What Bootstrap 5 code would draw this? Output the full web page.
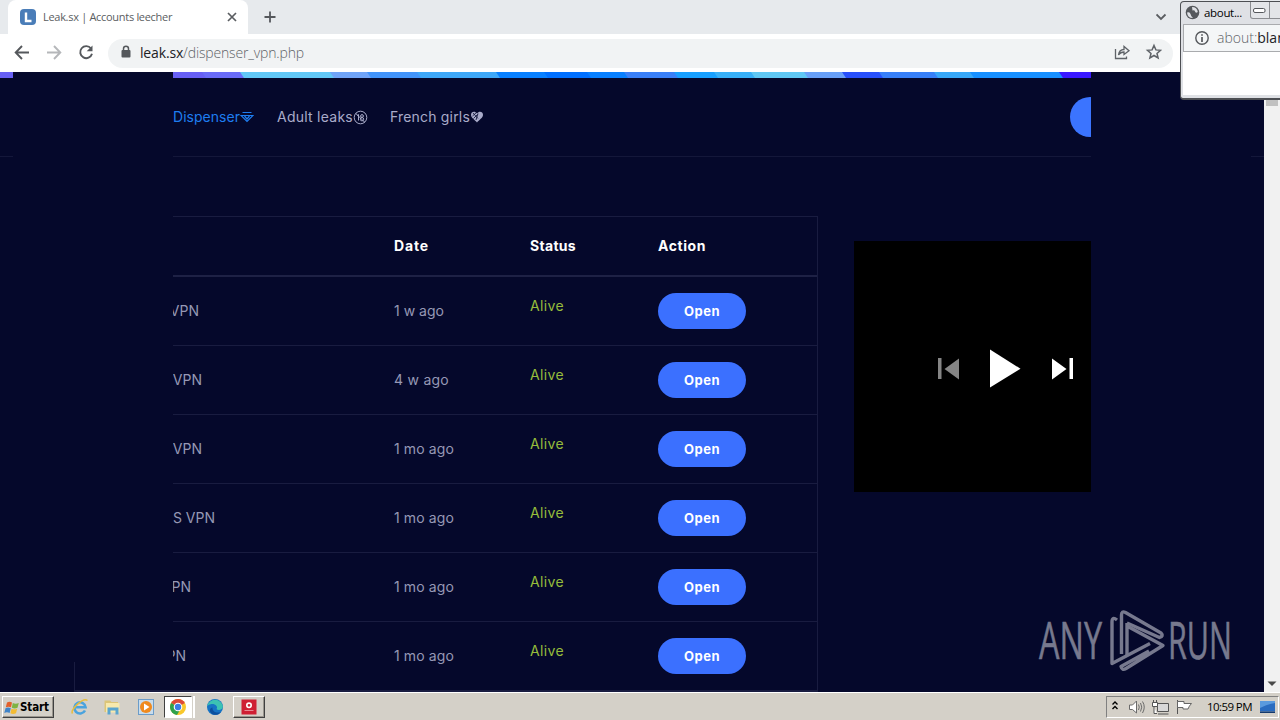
<!DOCTYPE html>
<html lang="en">
<head>
    <meta charset="UTF-8">
    <meta name="viewport" content="width=device-width, initial-scale=1.0">
    <title>Leak.sx | Accounts leecher</title>

    <!-- Bootstrap CSS -->
    <link href="https://cdn.jsdelivr.net/npm/bootstrap@5.3.0/dist/css/bootstrap.min.css" rel="stylesheet">
    <script src="https://cdn.jsdelivr.net/npm/bootstrap@5.3.0/dist/js/bootstrap.bundle.min.js"></script>

    <style>
        body {
            width: 1280px;
            height: 720px;
            background-color: #05082b;
            font-family: "Inter", "Liberation Sans", sans-serif;
        }
        svg {
            display: block;
            flex: none;
        }

        /* Browser chrome */
        .tab-strip {
            height: 34px;
            background: #e7eaed;
            padding-left: 8px;
        }
        .browser-tab {
            width: 240px;
            background: #fff;
            border-radius: 8px 8px 0 0;
            padding: 0 10px 0 12px;
            font: 11px "Open Sans", sans-serif;
            color: #5a5d61;
        }
        .tab-title {
            margin-left: 7px;
            padding-bottom: 2px;
        }
        .toolbar {
            height: 38px;
            background: #fff;
            padding-left: 13px;
        }
        .address {
            width: 1065px;
            height: 29px;
            margin-left: 13px;
            padding: 0 11px 2px 12px;
            border-radius: 15px;
            background: #f1f3f4;
            font: 300 14px "Open Sans", sans-serif;
            color: #5f6368;
        }
        .address b {
            font-weight: 400;
            color: #202124;
        }

        /* Web page */
        .page-view {
            height: 620px;
        }
        .site {
            width: 1264px;
        }
        .site-nav {
            height: 79px;
            border-bottom: 1px solid #14173a;
            padding: 0 154px 0 173px;
            font-size: 14px;
            color: #a9abc9;
        }
        .nav-item-text {
            height: 22px;
            line-height: 22px;
        }
        .nav-active {
            color: #1e7df0;
        }
        .round-btn {
            width: 40px;
            height: 40px;
            background: #3b74ff;
        }
        .site-main {
            padding: 59px 0 0 74px;
            gap: 36px;
        }
        .leaks {
            width: 744px;
            border: 1px solid #191c40;
            font-size: 14px;
            color: #9698b5;
        }
        .leaks-row {
            height: 69px;
            border-bottom: 1px solid #191c40;
        }
        .leaks-head {
            height: 60px;
            border-bottom: 2px solid #1e2145;
            font-weight: 700;
            color: #fff;
        }
        .cell-name { width: 319px; }
        .cell-date { width: 136px; }
        .cell-status { width: 128px; }
        .leaks-head > div,
        .cell-name,
        .cell-date {
            padding-bottom: 2px;
        }
        .alive {
            color: #96bd3b;
            padding-bottom: 12px;
        }
        .open-btn {
            width: 88px;
            height: 36px;
            padding-top: 1px;
            background: #3b70ff;
            color: #fff;
            font-size: 13px;
            font-weight: 700;
        }
        .player {
            width: 302px;
            height: 251px;
            margin-top: 25px;
            background: #000;
        }
        .side-ad {
            top: 0;
            width: 160px;
            height: 590px;
            background: #05082b;
        }
        .side-ad-left { left: 13px; }
        .side-ad-right { left: 1091px; }
        .scroll-track {
            width: 16px;
            background: #f1f1f1;
            padding: 28px 2px 5px;
        }
        .scroll-thumb {
            height: 6px;
            background: #c1c1c1;
        }
        .watermark {
            left: 1030px;
            top: 600px;
        }

        /* Popup window */
        .popup {
            left: 1180px;
            top: 1px;
            width: 110px;
            height: 99px;
            border: 1px solid #4d4f53;
            border-bottom-width: 2px;
            border-radius: 4px;
            background: #dfe1e5;
            padding: 0 0 3px 2px;
        }
        .popup-title {
            height: 22px;
            padding: 0 0 2px 2px;
            font: 11.5px "Open Sans", sans-serif;
            color: #000;
        }
        .popup-min {
            width: 26px;
            height: 17px;
            border: 1px solid #8b8d91;
            border-top: 0;
            border-radius: 0 0 0 3px;
            margin-left: 8px;
            background: #e3e5e8;
        }
        .popup-bar {
            height: 28px;
            background: #f4f6f7;
            border: 1px solid #a9abae;
            padding: 0 0 1px 11px;
            gap: 8px;
            font: 300 14px "Open Sans", sans-serif;
            color: #5f6368;
        }
        .popup-bar b {
            font-weight: 400;
            color: #202124;
        }

        /* Windows taskbar */
        .taskbar {
            height: 28px;
            background: #d4d0c8;
            border-top: 1px solid #fff;
            font-family: "DejaVu Sans Condensed", "DejaVu Sans", sans-serif;
            color: #000;
            padding: 2px 1px 1px 2px;
        }
        .raised {
            border: 1px solid;
            border-color: #fff #404040 #404040 #fff;
            box-shadow: inset -1px -1px #9a968e;
        }
        .sunken {
            border: 1px solid;
            border-color: #404040 #fff #fff #404040;
        }
        .start-btn {
            width: 52px;
            height: 22px;
            font-size: 11.5px;
            font-weight: 700;
            padding: 1px 0 0 1px;
        }
        .task-icon {
            width: 32px;
            height: 22px;
        }
        .tray {
            width: 173px;
            height: 22px;
            border: 1px solid;
            border-color: #808080 #fff #fff #808080;
            font-family: "Open Sans", sans-serif;
            font-size: 11.5px;
            padding: 0 1px 0 4px;
        }
    </style>
</head>
<body class="d-flex flex-column overflow-hidden position-relative">

    <!-- Tabs -->
    <div class="tab-strip d-flex align-items-stretch">
        <div class="browser-tab d-flex align-items-center">
            <svg width="16" height="16" viewBox="0 0 16 16">
                <rect width="16" height="16" rx="4" fill="#4a7db8"/>
                <path d="M6 3.500V12H11.500" fill="none" stroke="#fff" stroke-width="2.4"/>
            </svg>
            <span class="tab-title fit text-nowrap" data-w="129">Leak.sx | Accounts leecher</span>
            <svg class="ms-auto" width="12" height="12" viewBox="0 0 12 12"><path d="M2 2L10 10M10 2L2 10" stroke="#5a5d61" stroke-width="1.7"/></svg>
        </div>
        <svg class="align-self-center ms-3" width="13" height="13" viewBox="0 0 13 13"><path d="M6 .5V11.500M.5 6H11.500" stroke="#55585c" stroke-width="1.8"/></svg>
        <svg class="align-self-center ms-auto" width="124" height="12" viewBox="0 0 124 12"><path d="M.5 3.500L5 8L9.500 3.500" fill="none" stroke="#5a5d61" stroke-width="1.8"/></svg>
    </div>

    <!-- Toolbar -->
    <div class="toolbar d-flex align-items-center">
        <svg width="82" height="20" viewBox="0 0 82 20" fill="none" stroke-width="1.9">
            <path d="M16 9.500H3M9 3L2.700 9.500L9 16" stroke="#55585c"/>
            <path d="M34 9.500H47M41 3L47.300 9.500L41 16" stroke="#b5b7ba"/>
            <path d="M78 5.500A6 6 0 1 0 79 10.800" stroke="#55585c"/>
            <path d="M79.500 2.500V8.300H73.700Z" fill="#55585c" stroke="none"/>
        </svg>
        <div class="address d-flex align-items-center">
            <svg width="12" height="14" viewBox="0 0 12 14"><rect x="1.500" y="5" width="9" height="7.500" rx="1" fill="#55585c"/><path d="M3.500 5.500V3.700a2.500 2.500 0 0 1 5 0V5.500" fill="none" stroke="#55585c" stroke-width="1.500"/></svg>
            <span class="ms-2 fit text-nowrap" data-w="164"><b>leak.sx</b>/dispenser_vpn.php</span>
            <svg class="ms-auto" width="50" height="18" viewBox="0 0 50 18" fill="none" stroke="#5f6368" stroke-width="1.300">
                <path d="M3.500 6V15.500H14.500V13.500"/>
                <path d="M6.500 12C7 8 9 6.500 12 6.500V3.500L17 7.700L12 11.500V9C9.500 9 8 9.800 6.500 12Z"/>
                <path d="M42 2.500L43.900 6.900L48.500 7.300L45 10.400L46.100 15L42 12.500L37.900 15L39 10.400L35.500 7.300L40.100 6.900Z" stroke-width="1.500"/>
            </svg>
        </div>
    </div>

    <!-- Page -->
    <div class="page-view d-flex position-relative overflow-hidden">
        <div class="site">
            <svg width="1264" height="6" viewBox="0 0 1264 6">
                <rect width="1264" height="6" fill="#3a18ff"/>
                <g id="stripes"></g>
            </svg>
            <nav class="site-nav d-flex align-items-center">
                <div class="nav-item-text nav-active d-flex align-items-center" style="width: 104px">
                    <span class="fit" data-w="67">Dispenser</span>
                    <svg width="14" height="12" viewBox="0 0 14 12" fill="none" stroke="#1e7df0" stroke-width="1.200"><path d="M2.500 1.500H11.500M1 4.500H13L7 10.500ZM4.500 5L7 8L9.500 5"/></svg>
                </div>
                <div class="nav-item-text d-flex align-items-center" style="width: 113px">
                    <span class="fit" data-w="76">Adult leaks</span>
                    <svg width="15" height="15" viewBox="0 0 15 15" fill="none" stroke="#a9abc9"><circle cx="7.500" cy="7.500" r="6.300"/><path d="M2.800 3.500L12 12.500M4.200 5.500L5.500 4.500V10.500"/><circle cx="9" cy="6" r="1.400"/><circle cx="9" cy="9.200" r="1.700"/></svg>
                </div>
                <div class="nav-item-text d-flex align-items-center">
                    <span class="fit" data-w="80">French girls</span>
                    <svg width="14" height="14" viewBox="0 0 14 14"><path d="M7 12.500C5 10 1 8 1 4.800C1 1.500 5 .5 7 3.500C9 .5 13 1.500 13 4.800C13 8 9 10 7 12.500Z" fill="#a9abc9"/><path d="M2.500 6L6.500 2.500M3.500 8.500L7.500 4.500M3 3L8 8.500M8 3.500L6 10" stroke="#080b30" stroke-width=".8"/></svg>
                </div>
                <div class="round-btn rounded-circle ms-auto"></div>
            </nav>
            <div class="site-main d-flex align-items-start">
                <div class="leaks">
                    <div class="leaks-head d-flex align-items-center">
                        <div class="cell-name"></div>
                        <div class="cell-date"><span class="fit" data-w="35">Date</span></div>
                        <div class="cell-status"><span class="fit" data-w="46">Status</span></div>
                        <div><span class="fit" data-w="48">Action</span></div>
                    </div>
                    <div id="leakRows"></div>
                </div>
                <div class="player">
                    <svg width="302" height="251" viewBox="0 0 302 251">
                        <path d="M84 117h3.500v21H84zM105 117.500v21L90.500 128z" fill="#858585"/>
                        <path d="M136 108.500v38L166.500 127.700z" fill="#fff"/>
                        <path d="M198 117.500v21L212.500 128zM215.500 117h3.500v21h-3.500z" fill="#fff"/>
                    </svg>
                </div>
            </div>
        </div>
        <div class="scroll-track d-flex flex-column justify-content-between">
            <div class="scroll-thumb"></div>
            <svg class="mx-auto" width="10" height="6" viewBox="0 0 10 6"><path d="M.5 .5H9.500L5 5Z" fill="#4a4a4a"/></svg>
        </div>
        <!-- Side ads lie over the page -->
        <div class="side-ad side-ad-left position-absolute"></div>
        <div class="side-ad side-ad-right position-absolute"></div>
    </div>

    <!-- Taskbar -->
    <div class="taskbar d-flex align-items-center">
        <div class="start-btn raised d-flex align-items-center">
            <svg width="16" height="16" viewBox="0 0 16 16">
                <path d="M3 2.500Q5.500 1 8 2.500L7 7.300Q4.500 6 1.800 7.300Z" fill="#e2602b"/>
                <path d="M8.800 3Q11.500 4.300 14.800 3L13.500 7.800Q10.500 9 7.800 7.700Z" fill="#7fb343"/>
                <path d="M1.500 8.200Q4 7 6.800 8.300L5.600 13Q3 11.700.3 13Z" fill="#3f83c8"/>
                <path d="M7.500 8.700Q10.300 10 13.200 8.700L12 13.300Q9 14.800 6.400 13.300Z" fill="#f3bb32"/>
            </svg>
            <span class="fit" data-w="29">Start</span>
        </div>
        <div class="task-icon d-flex align-items-center justify-content-center ms-2">
            <svg class="ms-1" width="18" height="18" viewBox="0 0 18 18" fill="none"><path d="M14 12.500A5.600 5.600 0 1 1 14.600 9.300H4.500" stroke="#4aa3de" stroke-width="2.600"/><path d="M1.500 15.500C-1 12 12 -1 16.500 2.500" stroke="#e8bd3c" stroke-width="1.500"/></svg>
        </div>
        <div class="task-icon d-flex align-items-center justify-content-center">
            <svg class="ms-1" width="18" height="18" viewBox="0 0 18 18"><path d="M1.500 2.500H7L8.500 4H15V14H1.500Z" fill="#dcc578"/><path d="M3 5H16.500V14.500H3Z" fill="#f7e9ad"/><path d="M4.500 9.500H15.500V16.500H12.500V12.500H7.500V16.500H4.500Z" fill="#5aa5cf"/></svg>
        </div>
        <div class="task-icon d-flex align-items-center justify-content-center ms-1">
            <svg width="18" height="18" viewBox="0 0 18 18"><rect x="1.500" y="1.500" width="15" height="15" fill="#c9dceb" stroke="#6b9cc9"/><circle cx="9" cy="9" r="6" fill="#f08a1d"/><path d="M7 5.500V12.500L12.500 9Z" fill="#fff"/></svg>
        </div>
        <div class="sunken task-icon d-flex align-items-center justify-content-center bg-white" style="width: 28px; margin-left: 2px">
            <svg width="18" height="18" viewBox="0 0 18 18"><circle cx="9" cy="9" r="8" fill="#f9c82b"/><path d="M9 9L2.100 5A8 8 0 0 1 15.900 5Z" fill="#dd4b3a"/><path d="M9 9L2.100 5A8 8 0 0 0 8 17L11.500 11Z" fill="#2fa24d"/><circle cx="9" cy="9" r="4.300" fill="#fff"/><circle cx="9" cy="9" r="3.200" fill="#3c7de6"/></svg>
        </div>
        <div class="border-end border-2 border-white" style="width: 3px; height: 22px"></div>
        <div class="task-icon d-flex align-items-center justify-content-center ms-1">
            <svg width="18" height="18" viewBox="0 0 18 18"><circle cx="9" cy="9" r="8" fill="#1673c4"/><path d="M1.200 8A8 8 0 0 1 16.900 8.500C17 12 12 13 10.500 11C12.500 8.500 9 5.500 5.500 6Q2.500 6.500 1.200 8Z" fill="#3cc2b3"/><path d="M6.500 9.500C6 13 9.500 15.500 14.800 14.200C13 17 7.500 18 5 15C3 12.500 4 10 6.500 9.500Z" fill="#0d4f9e"/></svg>
        </div>
        <div class="task-icon raised d-flex align-items-center justify-content-center" style="margin-left: 2px">
            <svg width="16" height="16" viewBox="0 0 16 16"><rect x=".5" y=".5" width="15" height="15" fill="#cf1f33"/><circle cx="8" cy="6.300" r="2.200" fill="none" stroke="#fff" stroke-width="1.600"/><path d="M3.500 11.500H12.500" stroke="#e88a94"/></svg>
        </div>
        <div class="tray d-flex align-items-center ms-auto">
            <svg width="90" height="20" viewBox="0 0 90 20" fill="none" stroke="#6b6b6b">
                <path d="M1.500 7.500L4 5L6.500 7.500M1.500 12L4 9.500L6.500 12" stroke="#000" stroke-width="1.400"/>
                <path d="M18.500 8H21.500L25.500 4V16L21.500 12.500H18.500Z" fill="#fff"/>
                <path d="M27.500 7.500Q29 10 27.500 13M29.500 6Q32 10 29.500 14.500M31.500 4.500Q35 10 31.500 16"/>
                <path d="M46.500 6.500H57.500V14.500H46.500Z" fill="#d8d8d8" stroke="#555"/>
                <path d="M47 17H57.500M43 10V16.500H46M41.500 5.500H46.500V9.500H41.500ZM42.500 3V5.500M45.500 3V5.500" fill="#fff" stroke="#555"/>
                <path d="M66.500 3V17" stroke="#555"/>
                <path d="M66.500 4.500H73V6.500H80.500Q78 9 77 12H72V10.500H66.500Z" fill="#fff" stroke="#666"/>
            </svg>
            <span class="fit text-nowrap ms-auto me-2" data-w="45">10:59 PM</span>
            <svg width="17" height="16" viewBox="0 0 17 16"><path d="M0 2H15V12.500H0Z" fill="#2a6cc0"/><path d="M0 2H15V4Q8 5 0 9Z" fill="#5a9ade"/><path d="M0 12.500H15V14H0Z" fill="#143a6e"/></svg>
        </div>
    </div>

    <!-- Popup window -->
    <div class="popup position-absolute d-flex flex-column">
        <div class="popup-title d-flex align-items-center">
            <svg width="15" height="15" viewBox="0 0 15 15"><circle cx="7.500" cy="7.500" r="6.800" fill="#55585c"/><path d="M2 7.500Q5 6.500 5.500 9T8 13Q2.500 13 2 7.500ZM7 2Q12 2 12.800 7Q10.500 8.500 10 6.500T7.500 5.500Z" fill="#dfe1e5"/></svg>
            <span class="ms-1 fit" data-w="38">about...</span>
            <div class="popup-min d-flex align-items-center justify-content-center align-self-start">
                <svg width="13" height="5" viewBox="0 0 13 5"><rect x=".5" y=".5" width="11.500" height="4" rx="1.500" fill="#fff" stroke="#55585c"/></svg>
            </div>
            <div class="popup-min ms-0 align-self-start rounded-0 border-start-0"></div>
        </div>
        <div class="popup-bar d-flex align-items-center">
            <svg width="14" height="14" viewBox="0 0 14 14"><circle cx="7" cy="7" r="6.200" fill="none" stroke="#55585c" stroke-width="1.400"/><path d="M7 3.200V4.800M7 6V11" stroke="#55585c" stroke-width="1.700"/></svg>
            <span class="text-nowrap">about:<b>blank</b></span>
        </div>
        <div class="bg-white flex-fill"></div>
    </div>

    <!-- Watermark -->
    <svg class="watermark position-absolute" width="240" height="80" viewBox="0 0 240 80" fill="none" opacity=".58">
        <g fill="#c9cbd6" stroke="#c9cbd6" stroke-width=".5" font-family="Open Sans" font-size="52">
            <text x="9" y="59" textLength="63" lengthAdjust="spacingAndGlyphs">ANY</text>
            <text x="138" y="59" textLength="64" lengthAdjust="spacingAndGlyphs">RUN</text>
        </g>
        <g stroke="#c9cbd6" stroke-width="3.400" stroke-linejoin="round">
            <path d="M87 20Q82 16 82 22V63.500L120 43.500"/>
            <path d="M91.500 54V15Q91.500 10.500 95.500 12.500L131 33Q134 36 129.500 37.500L97 23"/>
            <path d="M97 23V55M97 26L133 45.500L96 68.500Q92 71 91 66.500L119 51"/>
        </g>
    </svg>

    <script>
        const leaks = [
            { name: "VPN", end: 199, date: "1 w ago", width: 50 },
            { name: "VPN", end: 202, date: "4 w ago", width: 55 },
            { name: "VPN", end: 202, date: "1 mo ago", width: 60 },
            { name: "S VPN", end: 215, date: "1 mo ago", width: 60 },
            { name: "VPN", end: 191, date: "1 mo ago", width: 60 },
            { name: "VPN", end: 186, date: "1 mo ago", width: 60 }
        ];

        document.getElementById("leakRows").innerHTML = leaks.map(leak => `
            <div class="leaks-row d-flex align-items-center">
                <div class="cell-name"><div class="text-end" style="width: ${leak.end - 75}px">${leak.name}</div></div>
                <div class="cell-date"><span class="fit" data-w="${leak.width}">${leak.date}</span></div>
                <div class="cell-status alive"><span class="fit" data-w="34">Alive</span></div>
                <div class="open-btn rounded-pill d-flex align-items-center justify-content-center"><span class="fit" data-w="36">Open</span></div>
            </div>
        `).join("");

        // Top banner: [start x, colour], each stripe has a slanted left edge
        const stripes = [
            [0, "#6860f5"], [203, "#6a6cf8"], [241, "#62c8f6"], [331, "#70a4f8"], [368, "#4294fa"],
            [418, "#3ea8f8"], [497, "#0880ff"], [545, "#0070ff"], [588, "#0880ff"], [625, "#3a80f8"],
            [675, "#18a0ff"], [715, "#38b0f8"], [752, "#60c8f4"], [805, "#68a0f8"], [843, "#2850fa"],
            [880, "#3880f8"], [935, "#38a8f8"], [971, "#1890ff"], [1060, "#3a18ff"]
        ];
        document.getElementById("stripes").innerHTML = stripes.map(([x, color], i) =>
            `<path d="M${i ? x - 1 : 0} 0H1264V6H${i ? x + 3 : 0}Z" fill="${color}"/>`
        ).join("");

        // Track the labels to their set widths
        document.querySelectorAll(".fit").forEach(label => {
            label.style.display = "inline-block";
            const gap = (label.dataset.w - label.getBoundingClientRect().width) / label.textContent.length;
            label.style.letterSpacing = gap.toFixed(2) + "px";
        });
    </script>
</body>
</html>
